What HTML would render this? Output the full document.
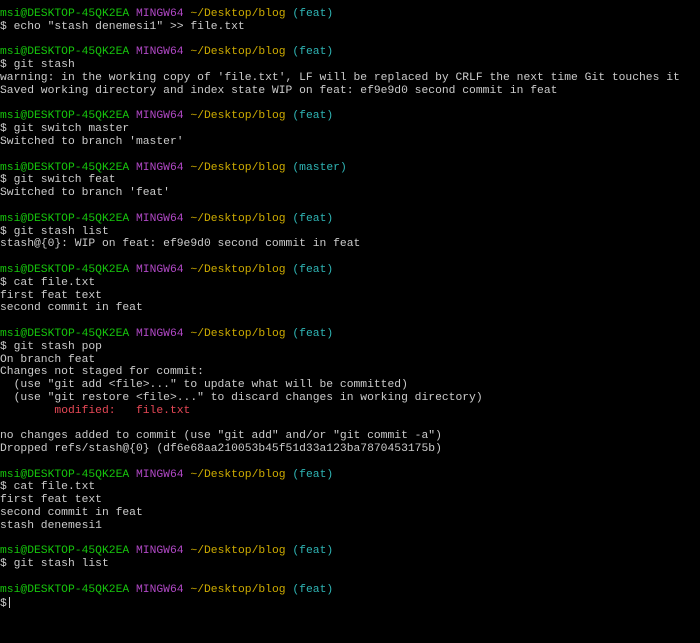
<!DOCTYPE html>
<html><head><meta charset="utf-8"><style>
html,body{margin:0;padding:0;background:#000;width:700px;height:643px;overflow:hidden}
pre{margin:0;padding:8px 0 0 0;font-family:"Liberation Mono",monospace;font-size:11.33px;line-height:12.8px;color:#cccccc;white-space:pre}
.g{color:#16c60c}.p{color:#b148c6}.y{color:#cdab00}.c{color:#2fb5b5}.r{color:#e74856}
.cur{display:inline-block;width:1px;height:11px;background:#ccc;vertical-align:-2px;margin-left:2px}
</style></head><body><pre><span class="g">msi@DESKTOP-45QK2EA</span> <span class="p">MINGW64</span> <span class="y">~/Desktop/blog</span> <span class="c">(feat)</span>
$ echo "stash denemesi1" &gt;&gt; file.txt

<span class="g">msi@DESKTOP-45QK2EA</span> <span class="p">MINGW64</span> <span class="y">~/Desktop/blog</span> <span class="c">(feat)</span>
$ git stash
warning: in the working copy of 'file.txt', LF will be replaced by CRLF the next time Git touches it
Saved working directory and index state WIP on feat: ef9e9d0 second commit in feat

<span class="g">msi@DESKTOP-45QK2EA</span> <span class="p">MINGW64</span> <span class="y">~/Desktop/blog</span> <span class="c">(feat)</span>
$ git switch master
Switched to branch 'master'

<span class="g">msi@DESKTOP-45QK2EA</span> <span class="p">MINGW64</span> <span class="y">~/Desktop/blog</span> <span class="c">(master)</span>
$ git switch feat
Switched to branch 'feat'

<span class="g">msi@DESKTOP-45QK2EA</span> <span class="p">MINGW64</span> <span class="y">~/Desktop/blog</span> <span class="c">(feat)</span>
$ git stash list
stash@{0}: WIP on feat: ef9e9d0 second commit in feat

<span class="g">msi@DESKTOP-45QK2EA</span> <span class="p">MINGW64</span> <span class="y">~/Desktop/blog</span> <span class="c">(feat)</span>
$ cat file.txt
first feat text
second commit in feat

<span class="g">msi@DESKTOP-45QK2EA</span> <span class="p">MINGW64</span> <span class="y">~/Desktop/blog</span> <span class="c">(feat)</span>
$ git stash pop
On branch feat
Changes not staged for commit:
  (use "git add &lt;file&gt;..." to update what will be committed)
  (use "git restore &lt;file&gt;..." to discard changes in working directory)
        <span class="r">modified:   file.txt</span>

no changes added to commit (use "git add" and/or "git commit -a")
Dropped refs/stash@{0} (df6e68aa210053b45f51d33a123ba7870453175b)

<span class="g">msi@DESKTOP-45QK2EA</span> <span class="p">MINGW64</span> <span class="y">~/Desktop/blog</span> <span class="c">(feat)</span>
$ cat file.txt
first feat text
second commit in feat
stash denemesi1

<span class="g">msi@DESKTOP-45QK2EA</span> <span class="p">MINGW64</span> <span class="y">~/Desktop/blog</span> <span class="c">(feat)</span>
$ git stash list

<span class="g">msi@DESKTOP-45QK2EA</span> <span class="p">MINGW64</span> <span class="y">~/Desktop/blog</span> <span class="c">(feat)</span>
$<span class="cur"></span></pre></body></html>
